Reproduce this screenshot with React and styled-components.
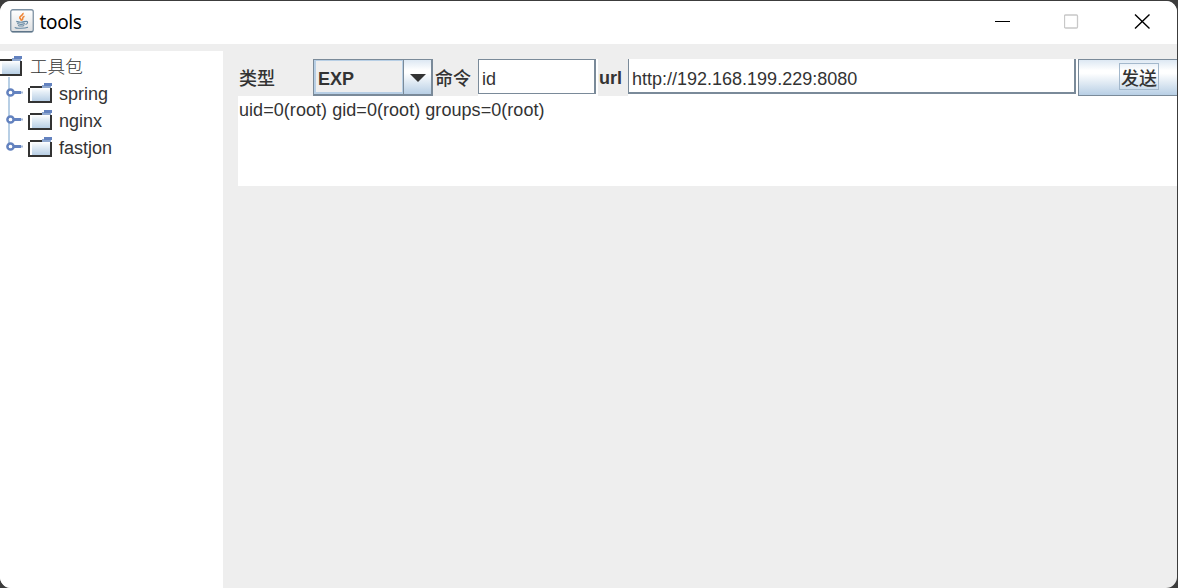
import React from "react";
import styled, { createGlobalStyle } from "styled-components";

const GlobalStyle = createGlobalStyle`
  * { box-sizing: border-box; }
  body { margin: 0; background: #303030; overflow: hidden; }
`;

const Window = styled.div`
  width: 1178px;
  height: 588px;
  padding: 1px 1px 0 0;
  background: #3c3c3c;
  color: #333;
  font: 18px/21px "Liberation Sans", "Noto Sans CJK SC", sans-serif;
  white-space: nowrap;
`;

const Frame = styled.div`
  display: flex;
  flex-direction: column;
  height: 587px;
  overflow: hidden;
  border-radius: 11px;
  background: #eee;
`;

const TitleBar = styled.header`
  display: flex;
  flex: none;
  align-items: center;
  height: 43px;
  padding: 0 26px 3px 10px;
  background: #fff;
`;

const Title = styled.h1`
  flex: 1;
  margin: 0 0 0 5.5px;
  padding-top: 1px;
  color: #000;
  font: 19px/24px "Noto Sans", sans-serif;
  letter-spacing: -0.35px;
`;

const WindowControls = styled.div`
  display: flex;
  gap: 53px;
  padding-top: 1px;
`;

const Content = styled.main`
  display: flex;
  flex: 1;
  gap: 15px;
  padding-top: 7px;
`;

const TreePanel = styled.nav`
  width: 223px;
  padding-top: 2px;
  background: #fff;
`;

const TreeRow = styled.div`
  display: flex;
  align-items: flex-start;
  height: 27px;
  ${(p) => (p.$root ? "margin-left: -2px; font-size: 17.6px;" : "padding-left: 5px;")}

  svg {
    flex: none;
  }
`;

const TreeLabel = styled.span`
  padding-top: 4px;
  margin-left: ${(p) => (p.$root ? 8 : 7)}px;
  ${(p) => (p.$root ? "font-weight: 300;" : "")}
`;

const Workspace = styled.section`
  flex: 1;
  padding-top: 8px;
  overflow: hidden;
`;

const Toolbar = styled.div`
  display: flex;
  height: 37px;
  background: #fff;
`;

const FieldLabel = styled.label`
  width: ${(p) => p.$width}px;
  padding-left: ${(p) => p.$indent || 1}px;
  background: #eee;
  font-weight: ${(p) => p.$weight || 700};
  line-height: ${(p) => (p.$weight ? 40 : 39)}px;
`;

const Combo = styled.div`
  display: flex;
  width: 120px;
  border: 1px solid #7a8a99;
  border-right-width: 2px;
  border-bottom-width: 2px;
`;

const ComboValue = styled.div`
  width: 89px;
  padding-left: 2px;
  border: 2px solid #b8cfe5;
  border-width: 1px 1px 2px 2px;
  background: #eee;
  font-weight: bold;
  line-height: 37px;
`;

const ComboArrow = styled.div`
  display: flex;
  flex: 1;
  align-items: center;
  justify-content: center;
  padding-top: 2px;
  border-left: 1px solid #7a8a99;
  background: linear-gradient(#dde8f3, #fff 30%, #fff 38%, #b8cfe5);
`;

const TextField = styled.input`
  width: ${(p) => p.$width}px;
  height: 35px;
  margin-right: 2px;
  padding: ${(p) => p.$padTop}px 3px 0;
  border: 0 solid #7a8a99;
  border-width: ${(p) => p.$border};
  border-radius: 0;
  outline: none;
  background: #fff;
  color: #333;
  font: inherit;
`;

const SendButton = styled.button`
  display: flex;
  flex: 1;
  justify-content: center;
  padding: 3px 0 0 22px;
  border: 1px solid #7a8a99;
  border-right: 0;
  border-radius: 0;
  background: linear-gradient(#dde8f3, #fff 30%, #fff 38%, #b8cfe5);
  color: #333;
  font: inherit;
  font-weight: 500;
`;

const FocusBox = styled.span`
  width: 40px;
  height: 27px;
  border: 1px solid #a3b8cc;
  line-height: 31px;
`;

const Output = styled.pre`
  height: 90px;
  margin: 0;
  padding: 4px 1px;
  background: #fff;
  font: inherit;
  letter-spacing: 0.05px;
`;

const FolderIcon = () => (
  <svg width="24" height="27" shapeRendering="crispEdges">
    <defs>
      <linearGradient id="folder" x1="0" y1="0" x2="0" y2="1">
        <stop offset="0" stopColor="#fff" />
        <stop offset="0.3" stopColor="#e6eff7" />
        <stop offset="1" stopColor="#b8cfe5" />
      </linearGradient>
    </defs>
    <rect x="4" y="8" width="18" height="13" fill="url(#folder)" />
    <path d="M0 8h2v13h20V8h2v15H0zM2 6h12v2H2z" fill="#333" />
    <path d="M16 3h8v3h-8z" fill="#6382bf" />
    <path d="M14 5h2v1h7v2h-9z" fill="#8fa8d0" />
  </svg>
);

const HandleIcon = ({ first, last }) => (
  <svg width="23" height="27" overflow="visible">
    <path d={`M3 ${first ? -3 : 0}h2V${last ? 10 : 27}H3z`} fill="#b8cfe5" />
    <path d="M8 11h8v3H8z" fill="#6382bf" />
    <path d="M16 11.5h2v2h-2z" fill="#a3b8d8" />
    <circle cx="5.5" cy="12.5" r="3.1" fill="#fff" stroke="#6382bf" strokeWidth="2.5" />
  </svg>
);

const JavaIcon = () => (
  <svg width="24" height="24" viewBox="0 0 24 24" fill="none">
    <defs>
      <linearGradient id="tile" x1="0" y1="0" x2="0" y2="1">
        <stop offset="0" stopColor="#fff" />
        <stop offset="1" stopColor="#dddfe1" />
      </linearGradient>
    </defs>
    <rect x=".75" y=".75" width="22.5" height="22" rx="2" fill="url(#tile)" stroke="#7d91a3" strokeWidth="1.3" />
    <path d="M1.5 22.8h21" stroke="#526a7e" />
    <path d="M12.8 4c1.2 2-3.5 3-3 4.8.2 1 1.6 1.4 1.4 3M14.5 7.2c-3.2 1.2-1 2.2-2.3 4" stroke="#ee8435" strokeWidth="1.6" />
    <path d="M6.3 12.4c2.5 1 6.5.9 9.2 0M7.2 14.6c2 .9 5.2.9 7.7 0M8 16.5c2 .7 4.2.7 6.2 0M15.5 12.5c3-.6 2.5 2.2 0 3M4.8 18.3c1 1.3 10 1.3 13.2 0" stroke="#6689a3" strokeWidth="1.15" />
  </svg>
);

const packages = ["spring", "nginx", "fastjon"];

export default function App() {
  return (
    <Window>
      <GlobalStyle />
      <Frame>
        <TitleBar>
          <JavaIcon />
          <Title>tools</Title>
          <WindowControls>
            <svg width="16" height="16"><path d="M0 7.5h15" stroke="#000" /></svg>
            <svg width="17" height="16"><rect x=".5" y="1" width="13" height="13" rx="1" fill="none" stroke="#c8c8c8" strokeWidth="1.3" /></svg>
            <svg width="17" height="16"><path d="M1 .5l14.5 14M15.5 .5L1 14.5" stroke="#000" strokeWidth="1.4" /></svg>
          </WindowControls>
        </TitleBar>
        <Content>
          <TreePanel>
            <TreeRow $root><FolderIcon /><TreeLabel $root>工具包</TreeLabel></TreeRow>
            {packages.map((name, i) => (
              <TreeRow key={name}>
                <HandleIcon first={i === 0} last={i === packages.length - 1} />
                <FolderIcon />
                <TreeLabel>{name}</TreeLabel>
              </TreeRow>
            ))}
          </TreePanel>
          <Workspace>
            <Toolbar>
              <FieldLabel $width={75} $weight={500}>类型</FieldLabel>
              <Combo>
                <ComboValue>EXP</ComboValue>
                <ComboArrow>
                  <svg width="16" height="8"><path d="M0 0h16L8 8z" fill="#333" /></svg>
                </ComboArrow>
              </Combo>
              <FieldLabel $width={45} $indent={2} $weight={500}>命令</FieldLabel>
              <TextField $width={118} $padTop={6} $border="1px 2px 1px 1px" defaultValue="id" />
              <FieldLabel $width={30}>url</FieldLabel>
              <TextField $width={448} $padTop={7} $border="0 2px 2px 1px" defaultValue="http://192.168.199.229:8080" />
              <SendButton><FocusBox>发送</FocusBox></SendButton>
            </Toolbar>
            <Output>uid=0(root) gid=0(root) groups=0(root)</Output>
          </Workspace>
        </Content>
      </Frame>
    </Window>
  );
}
